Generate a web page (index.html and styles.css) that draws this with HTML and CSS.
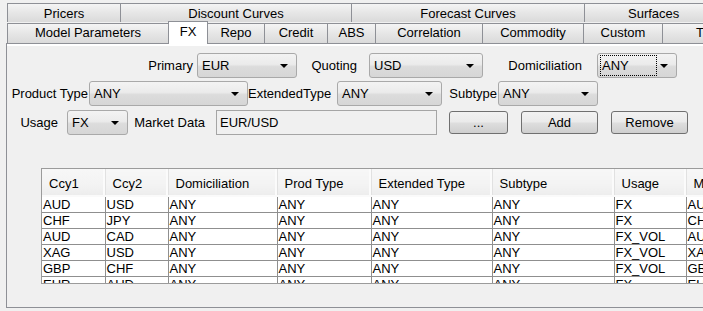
FILE: index.html
```html
<!DOCTYPE html>
<html lang="en">
<head>
    <meta charset="UTF-8">
    <title>FX Market Data</title>
    <link rel="stylesheet" href="styles.css">
</head>
<body>
    <div class="tabs">
        <div class="tab-row back">
            <div class="tab w-pricers">Pricers</div>
            <div class="tab w-discount">Discount Curves</div>
            <div class="tab w-forecast">Forecast Curves</div>
            <div class="tab w-surfaces">Surfaces</div>
        </div>
        <div class="tab-row front">
            <div class="tab w-model">Model Parameters</div>
            <div class="tab selected w-fx">FX</div>
            <div class="tab w-repo">Repo</div>
            <div class="tab w-credit">Credit</div>
            <div class="tab w-abs">ABS</div>
            <div class="tab w-corr">Correlation</div>
            <div class="tab w-comm">Commodity</div>
            <div class="tab w-custom">Custom</div>
            <div class="tab w-t">T</div>
        </div>
    </div>

    <div class="panel">
        <div class="form-row row1">
            <span class="lbl l-primary">Primary</span>
            <div class="combo c-primary"><span class="val">EUR</span><span class="arrow"></span></div>
            <span class="lbl l-quoting">Quoting</span>
            <div class="combo c-quoting"><span class="val">USD</span><span class="arrow"></span></div>
            <span class="lbl l-domicile">Domiciliation</span>
            <div class="combo c-domicile"><span class="val focus">ANY</span><span class="arrow"></span></div>
        </div>
        <div class="form-row row2">
            <span class="lbl l-prod">Product Type</span>
            <div class="combo c-prod"><span class="val">ANY</span><span class="arrow"></span></div>
            <span class="lbl l-ext">ExtendedType</span>
            <div class="combo c-ext"><span class="val">ANY</span><span class="arrow"></span></div>
            <span class="lbl l-sub">Subtype</span>
            <div class="combo c-sub"><span class="val">ANY</span><span class="arrow"></span></div>
        </div>
        <div class="form-row row3">
            <span class="lbl l-usage">Usage</span>
            <div class="combo c-usage"><span class="val">FX</span><span class="arrow"></span></div>
            <span class="lbl l-market">Market Data</span>
            <div class="field">EUR/USD</div>
            <button type="button" class="btn b-dots">...</button>
            <button type="button" class="btn b-add">Add</button>
            <button type="button" class="btn b-remove">Remove</button>
        </div>

        <div class="table-wrap">
            <table class="grid">
                <colgroup>
                    <col style="width: 63px">
                    <col style="width: 63px">
                    <col style="width: 109px">
                    <col style="width: 94px">
                    <col style="width: 121px">
                    <col style="width: 122px">
                    <col style="width: 72px">
                    <col style="width: 90px">
                </colgroup>
                <thead>
                    <tr>
                        <th>Ccy1</th><th>Ccy2</th><th>Domiciliation</th><th>Prod Type</th>
                        <th>Extended Type</th><th>Subtype</th><th>Usage</th><th>Market Data</th>
                    </tr>
                </thead>
                <tbody>
                    <tr><td>AUD</td><td>USD</td><td>ANY</td><td>ANY</td><td>ANY</td><td>ANY</td><td>FX</td><td>AUD/USD</td></tr>
                    <tr><td>CHF</td><td>JPY</td><td>ANY</td><td>ANY</td><td>ANY</td><td>ANY</td><td>FX</td><td>CHF/JPY</td></tr>
                    <tr><td>AUD</td><td>CAD</td><td>ANY</td><td>ANY</td><td>ANY</td><td>ANY</td><td>FX_VOL</td><td>AUD/CAD</td></tr>
                    <tr><td>XAG</td><td>USD</td><td>ANY</td><td>ANY</td><td>ANY</td><td>ANY</td><td>FX_VOL</td><td>XAG/USD</td></tr>
                    <tr><td>GBP</td><td>CHF</td><td>ANY</td><td>ANY</td><td>ANY</td><td>ANY</td><td>FX_VOL</td><td>GBP/CHF</td></tr>
                    <tr><td>EUR</td><td>AUD</td><td>ANY</td><td>ANY</td><td>ANY</td><td>ANY</td><td>FX</td><td>EUR/AUD</td></tr>
                </tbody>
            </table>
        </div>
    </div>
</body>
</html>
```

FILE: styles.css
```css
body {
    margin: 0;
    width: 703px;
    height: 311px;
    overflow: hidden;
    background-color: #f0f0f0;
    font-family: "Liberation Sans", Arial, sans-serif;
    font-size: 13px;
    color: #000;
}

/* tabs */
.tabs {
    padding: 3px 0 0 7px;
}
.tab-row {
    display: flex;
    white-space: nowrap;
}
.tab-row.front {
    margin-top: -1px;
    align-items: flex-end;
}
.tab {
    flex: none;
    box-sizing: border-box;
    height: 20px;
    line-height: 18px;
    text-align: center;
    border: 1px solid #8e9096;
    border-bottom: none;
    margin-right: -1px;
    background: linear-gradient(#f4f4f4, #e6e6e6 50%, #dadada);
}
.tab-row.back .tab {
    height: 19px;
    line-height: 19px;
}
.tab.selected {
    position: relative;
    z-index: 2;
    height: 23px;
    line-height: 20px;
    margin-bottom: -1px;
    background: #fff;
}
.w-pricers { width: 114px; }
.w-discount { width: 232px; }
.w-forecast { width: 234px; }
.w-surfaces { width: 200px; text-align: left; padding-left: 43px; }
.w-model { width: 162px; }
.w-fx { width: 40px; }
.w-repo { width: 58px; }
.w-credit { width: 64px; }
.w-abs { width: 49px; }
.w-corr { width: 108px; }
.w-comm { width: 102px; }
.w-custom { width: 80px; }
.w-t { width: 90px; text-align: left; padding-left: 33px; }

/* content panel */
.panel {
    position: relative;
    z-index: 1;
    box-sizing: border-box;
    margin-left: 6px;
    width: 800px;
    height: 265px;
    border: 1px solid #8e9096;
    box-shadow: inset 0 2px #fff;
    background-color: #f0f0f0;
}

.form-row {
    display: flex;
    align-items: center;
    white-space: nowrap;
}
.row1 { margin-top: 9px; height: 25px; }
.row2 { margin-top: 3px; height: 25px; }
.row3 { margin-top: 4px; height: 25px; }

.lbl {
    flex: none;
    box-sizing: border-box;
    text-align: right;
}
.l-primary { width: 186px; margin-right: 4px; }
.l-quoting { width: 60px; margin-right: 12px; }
.l-domicile { width: 99px; margin-right: 15px; }
.l-prod { width: 81px; margin-right: 1px; }
.l-ext { width: 83px; margin-right: 6px; }
.l-sub { width: 55px; margin-right: 1px; }
.l-usage { width: 51px; margin-right: 9px; }
.l-market { width: 77px; margin-right: 11px; }

.combo {
    flex: none;
    position: relative;
    box-sizing: border-box;
    height: 25px;
    border: 1px solid #a9a9a9;
    border-radius: 3px;
    background: linear-gradient(#f3f3f3, #ebebeb 45%, #dcdcdc 55%, #d6d6d6);
    display: flex;
    align-items: center;
}
.combo .val {
    margin-left: 2px;
    padding: 0 1px;
    line-height: 19px;
    border: 1px dotted transparent;
}
.combo .val.focus {
    border-color: #000;
    width: 53px;
}
.combo .arrow {
    position: absolute;
    right: 8px;
    top: 10px;
    width: 0;
    height: 0;
    border-left: 4px solid transparent;
    border-right: 4px solid transparent;
    border-top: 4px solid #000;
}
.c-primary { width: 100px; }
.c-quoting { width: 114px; }
.c-domicile { width: 80px; }
.c-prod { width: 159px; }
.c-ext { width: 105px; }
.c-sub { width: 100px; }
.c-usage { width: 61px; }

.field {
    flex: none;
    box-sizing: border-box;
    width: 221px;
    height: 25px;
    line-height: 23px;
    padding-left: 3px;
    border: 1px solid #a5a5a5;
    background-color: #f0f0f0;
}

.btn {
    flex: none;
    box-sizing: border-box;
    height: 23px;
    padding: 0;
    font-family: inherit;
    font-size: 13px;
    color: #000;
    border: 1px solid #707070;
    border-radius: 3px;
    background: linear-gradient(#f2f2f2, #ebebeb 45%, #dddddd 55%, #cfcfcf);
}
.b-dots { width: 59px; margin-left: 12px; }
.b-add { width: 77px; margin-left: 13px; }
.b-remove { width: 77px; margin-left: 13px; }

/* table */
.table-wrap {
    margin: 33px 0 0 34px;
    height: 114px;
    overflow: hidden;
    border-top: 1px solid #9b9b9b;
    border-left: 1px solid #9b9b9b;
    border-bottom: 1px solid #9b9b9b;
    background-color: #fff;
}
.grid {
    border-collapse: collapse;
    table-layout: fixed;
    width: 734px;
}
.grid th {
    height: 27px;
    box-sizing: border-box;
    padding: 3px 0 0 7px;
    text-align: left;
    font-weight: normal;
    background: linear-gradient(#f7f7f7, #f3f3f3 60%, #ededed);
    border-right: 1px solid #e1e1e1;
    border-bottom: 2px solid #fafafa;
    box-shadow: inset -2px 0 #fbfbfb;
}
.grid td {
    height: 15px;
    box-sizing: border-box;
    padding: 0 0 0 1px;
    line-height: 15px;
    border-right: 1px solid #8f8f8f;
    border-bottom: 1px solid #8f8f8f;
    white-space: nowrap;
    overflow: hidden;
}
```
